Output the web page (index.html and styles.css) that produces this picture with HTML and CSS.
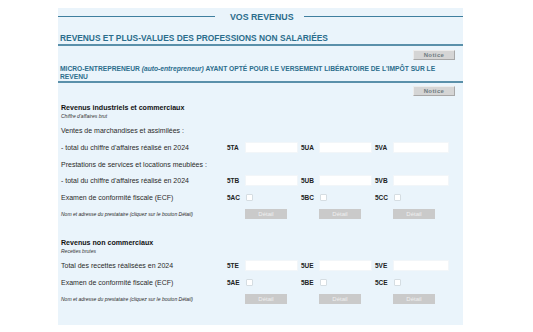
FILE: index.html
```html
<!DOCTYPE html>
<html lang="fr">
<head>
<meta charset="utf-8">
<title>Vos revenus</title>
<link rel="stylesheet" href="styles.css">
</head>
<body>
<div class="panel">
  <div class="title-row">
    <span class="line line-left"></span>
    <span class="title">VOS REVENUS</span>
    <span class="line line-right"></span>
  </div>
  <h2 class="sec-head">REVENUS ET PLUS-VALUES DES PROFESSIONS NON SALARIÉES</h2>
  <div class="notice-row"><button class="notice">Notice</button></div>
  <h3 class="sub-head">MICRO-ENTREPRENEUR <i>(auto-entrepreneur)</i> AYANT OPTÉ POUR LE VERSEMENT LIBÉRATOIRE DE L'IMPÔT SUR LE REVENU</h3>
  <div class="notice-row"><button class="notice">Notice</button></div>

  <div class="sect sect-1">
    <div class="grp-title">Revenus industriels et commerciaux</div>
    <div class="grp-sub">Chiffre d'affaires brut</div>
    <div class="rows">
      <div class="row"><span class="lbl">Ventes de marchandises et assimilées :</span></div>
      <div class="row">
        <span class="lbl">- total du chiffre d'affaires réalisé en 2024</span>
        <span class="grp"><b class="code">5TA</b><span class="inp"></span></span>
        <span class="grp"><b class="code">5UA</b><span class="inp"></span></span>
        <span class="grp"><b class="code">5VA</b><span class="inp inp-last"></span></span>
      </div>
      <div class="row"><span class="lbl">Prestations de services et locations meublées :</span></div>
      <div class="row">
        <span class="lbl">- total du chiffre d'affaires réalisé en 2024</span>
        <span class="grp"><b class="code">5TB</b><span class="inp"></span></span>
        <span class="grp"><b class="code">5UB</b><span class="inp"></span></span>
        <span class="grp"><b class="code">5VB</b><span class="inp inp-last"></span></span>
      </div>
      <div class="row">
        <span class="lbl">Examen de conformité fiscale (ECF)</span>
        <span class="grp"><b class="code">5AC</b><span class="chk"></span></span>
        <span class="grp"><b class="code">5BC</b><span class="chk"></span></span>
        <span class="grp"><b class="code">5CC</b><span class="chk"></span></span>
      </div>
      <div class="row">
        <span class="lbl lbl-small">Nom et adresse du prestataire (cliquez sur le bouton Détail)</span>
        <span class="grp"><span class="code"></span><span class="detail">Détail</span></span>
        <span class="grp"><span class="code"></span><span class="detail">Détail</span></span>
        <span class="grp"><span class="code"></span><span class="detail">Détail</span></span>
      </div>
    </div>
  </div>

  <div class="sect sect-2">
    <div class="grp-title">Revenus non commerciaux</div>
    <div class="grp-sub">Recettes brutes</div>
    <div class="rows">
      <div class="row">
        <span class="lbl">Total des recettes réalisées en 2024</span>
        <span class="grp"><b class="code">5TE</b><span class="inp"></span></span>
        <span class="grp"><b class="code">5UE</b><span class="inp"></span></span>
        <span class="grp"><b class="code">5VE</b><span class="inp inp-last"></span></span>
      </div>
      <div class="row">
        <span class="lbl">Examen de conformité fiscale (ECF)</span>
        <span class="grp"><b class="code">5AE</b><span class="chk"></span></span>
        <span class="grp"><b class="code">5BE</b><span class="chk"></span></span>
        <span class="grp"><b class="code">5CE</b><span class="chk"></span></span>
      </div>
      <div class="row">
        <span class="lbl lbl-small">Nom et adresse du prestataire (cliquez sur le bouton Détail)</span>
        <span class="grp"><span class="code"></span><span class="detail">Détail</span></span>
        <span class="grp"><span class="code"></span><span class="detail">Détail</span></span>
        <span class="grp"><span class="code"></span><span class="detail">Détail</span></span>
      </div>
    </div>
  </div>
</div>
</body>
</html>
```
FILE: styles.css
```css
* { box-sizing: border-box; }
html, body { margin: 0; padding: 0; background: #ffffff; }
body { font-family: "Liberation Sans", Arial, sans-serif; color: #333; }

.panel {
  margin: 8px 0 0 58px;
  width: 405px;
  background: #eaf4fb;
  padding-bottom: 18px;
}

.title-row {
  display: flex;
  align-items: center;
  height: 17px;
}
.line { display: block; height: 1px; background: #3f7f9f; }
.line-left { width: 157px; }
.line-right { flex: 1; }
.title {
  font-size: 8.8px;
  font-weight: bold;
  color: #2b6d8c;
  margin: 0 10px 0 15px;
  line-height: 10px;
}

.sec-head {
  margin: 0;
  height: 21px;
  padding: 8px 0 0 2px;
  font-size: 8.4px;
  line-height: 10px;
  font-weight: bold;
  color: #2b6d8c;
  border-bottom: 2px solid #5a90aa;
}

.notice-row {
  display: flex;
  justify-content: flex-end;
  padding-right: 8px;
}
.notice {
  margin: 4px 0 0;
  width: 42px;
  height: 10px;
  padding: 0;
  font-family: "Liberation Sans", Arial, sans-serif;
  font-size: 6px;
  font-weight: bold;
  letter-spacing: 0.4px;
  color: #6e7c82;
  background: #d5d5d5;
  border: 1px solid;
  border-color: #ececec #a8a8a8 #a8a8a8 #ececec;
  line-height: 8px;
}
.sub-head + .notice-row .notice { margin-top: 3px; }

.sub-head {
  margin: 5px 0 0;
  padding: 0 6px 0 2px;
  font-size: 6.7px;
  line-height: 8px;
  font-weight: bold;
  color: #2b6d8c;
  border-bottom: 2px solid #5a90aa;
}
.sub-head i { font-weight: bold; }

.sect { padding-left: 3px; }
.sect-1 { padding-top: 8px; }
.sect-2 { padding-top: 16.5px; }

.grp-title {
  font-size: 7.1px;
  font-weight: bold;
  color: #111;
  line-height: 9px;
}
.grp-sub {
  font-size: 5px;
  font-style: italic;
  color: #333;
  line-height: 6px;
}
.rows { margin-top: 3.7px; }
.row {
  display: flex;
  align-items: center;
  height: 16.6px;
}
.lbl {
  width: 166px;
  font-size: 7px;
  color: #2a2a2a;
  white-space: nowrap;
}
.lbl-small {
  font-size: 5px;
  font-style: italic;
}
.grp {
  display: flex;
  align-items: center;
  width: 74px;
}
.code {
  width: 18px;
  font-size: 6.5px;
  font-weight: bold;
  color: #222;
}
.inp {
  display: block;
  width: 53px;
  height: 11px;
  background: #ffffff;
  border: 1px solid #f2f6f9;
}
.inp-last { width: 56px; }
.chk {
  display: block;
  width: 7px;
  height: 7px;
  margin-left: 1px;
  background: #ffffff;
  border: 1px solid #d5dde2;
  border-radius: 1px;
}
.detail {
  display: block;
  width: 42px;
  height: 10px;
  background: #cacaca;
  color: #f0f0f0;
  font-size: 6px;
  line-height: 10px;
  text-align: center;
}
```
